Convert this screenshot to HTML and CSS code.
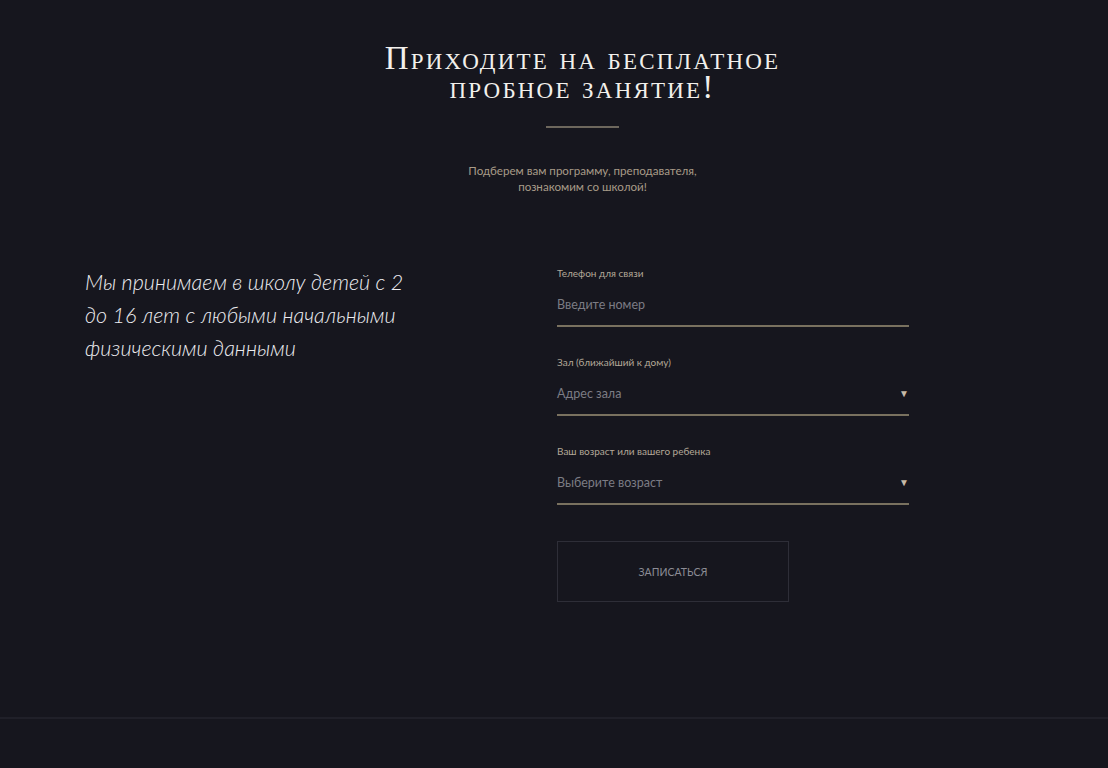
FILE: index.html
```html
<!DOCTYPE html>
<html lang="ru">
<head>
<meta charset="utf-8">
<title>Пробное занятие</title>
<link rel="stylesheet" href="styles.css">
</head>
<body>
<section class="trial">
  <header class="trial-head">
    <h2 class="trial-title"><span class="title-line">Приходите на бесплатное</span><span class="title-line">пробное занятие!</span></h2>
    <div class="trial-divider"></div>
    <p class="trial-sub">Подберем вам программу, преподавателя,<br>познакомим со школой!</p>
  </header>
  <div class="trial-body">
    <div class="trial-info">
      <p>Мы принимаем в школу детей с 2 до 16 лет с любыми начальными физическими данными</p>
    </div>
    <form class="trial-form">
      <div class="field">
        <label class="field-label">Телефон для связи</label>
        <div class="field-control"><span class="field-placeholder">Введите номер</span></div>
      </div>
      <div class="field">
        <label class="field-label">Зал (ближайший к дому)</label>
        <div class="field-control"><span class="field-placeholder">Адрес зала</span><span class="field-arrow">▼</span></div>
      </div>
      <div class="field">
        <label class="field-label">Ваш возраст или вашего ребенка</label>
        <div class="field-control"><span class="field-placeholder">Выберите возраст</span><span class="field-arrow">▼</span></div>
      </div>
      <button type="button" class="submit">ЗАПИСАТЬСЯ</button>
    </form>
  </div>
</section>
<footer class="footer"></footer>
</body>
</html>
```

FILE: styles.css
```css
html, body {
  margin: 0;
  padding: 0;
  background: #16161e;
  height: 100%;
}
body {
  font-family: "Lato", "Open Sans", sans-serif;
  overflow: hidden;
}
.trial {
  padding-top: 43px;
  height: 719px;
  box-sizing: border-box;
  border-bottom: 2px solid #202029;
}
.trial-head {
  display: flex;
  flex-direction: column;
  align-items: center;
  text-align: center;
  padding-left: 57px;
}
.trial-title {
  margin: 0;
  display: flex;
  flex-direction: column;
  align-items: center;
  font-family: "Liberation Serif", serif;
  font-weight: 400;
  font-variant: small-caps;
  font-size: 33px;
  letter-spacing: 2.2px;
  color: #f2f0ec;
}
.title-line {
  display: block;
  line-height: 30px;
  height: 29px;
}
.trial-divider {
  width: 73px;
  height: 2px;
  background: #6d675d;
  margin-top: 25px;
}
.trial-sub {
  margin: 35px 0 0;
  font-size: 11.6px;
  line-height: 16px;
  color: #a89b88;
}
.trial-body {
  display: flex;
  padding-left: 85px;
  margin-top: 64px;
}
.trial-info {
  width: 472px;
  padding-top: 7px;
}
.trial-info p {
  margin: 0;
  width: 340px;
  font-style: italic;
  font-weight: 300;
  font-size: 21.5px;
  line-height: 33px;
  color: #ececf0;
}
.trial-form {
  width: 352px;
  display: flex;
  flex-direction: column;
  padding-top: 8px;
}
.field {
  display: flex;
  flex-direction: column;
  margin-bottom: 29px;
}
.field-label {
  font-size: 10px;
  line-height: 12px;
  color: #b3a898;
}
.field-control {
  display: flex;
  justify-content: space-between;
  align-items: center;
  height: 38px;
  margin-top: 8px;
  border-bottom: 2px solid #79715f;
}
.field-placeholder {
  font-size: 12.5px;
  color: #7c7c84;
  padding-bottom: 4px;
}
.field-arrow {
  font-size: 10px;
  color: #c7bba8;
  padding-bottom: 4px;
}
.submit {
  align-self: flex-start;
  margin-top: 7px;
  width: 232px;
  height: 61px;
  background: transparent;
  border: 1px solid #2e2e38;
  color: #8c8c95;
  font-family: "Lato", "Open Sans", sans-serif;
  font-size: 10.5px;
  letter-spacing: 0;
}
.footer {
  height: 49px;
}
```
